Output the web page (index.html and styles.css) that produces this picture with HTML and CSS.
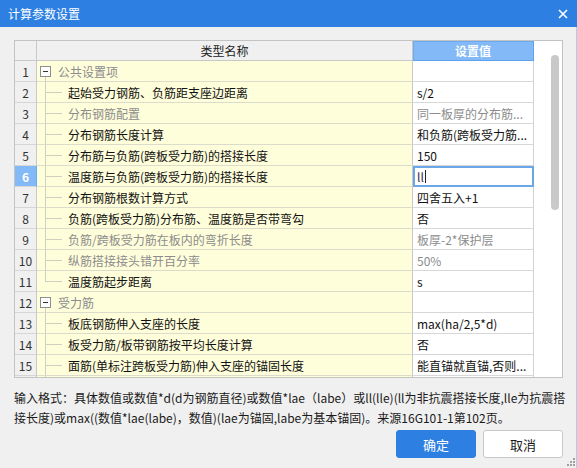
FILE: index.html
```html
<!DOCTYPE html>
<html lang="zh-CN">
<head>
<meta charset="utf-8">
<title>计算参数设置</title>
<link rel="stylesheet" href="styles.css">
</head>
<body>
<div class="dialog">
  <div class="titlebar">
    <span class="title">计算参数设置</span>
    <svg class="close" width="10" height="10" viewBox="0 0 10 10"><path d="M1 1 L9 9 M9 1 L1 9" stroke="#fff" stroke-width="1.6" fill="none"/></svg>
  </div>
  <div class="content">
    <div class="grid-wrap">
      <div class="grid">
        <div class="row head"><div class="c num"></div><div class="c name">类型名称</div><div class="c val">设置值</div></div>
        <div class="row group"><div class="c num">1</div><div class="c name"><span class="tree"><span class="box"></span></span><span class="muted">公共设置项</span></div><div class="c val"></div></div>
        <div class="row"><div class="c num">2</div><div class="c name"><span class="tree"></span>起始受力钢筋、负筋距支座边距离</div><div class="c val">s/2</div></div>
        <div class="row"><div class="c num">3</div><div class="c name"><span class="tree"></span><span class="muted">分布钢筋配置</span></div><div class="c val muted">同一板厚的分布筋...</div></div>
        <div class="row"><div class="c num">4</div><div class="c name"><span class="tree"></span>分布钢筋长度计算</div><div class="c val">和负筋(跨板受力筋...</div></div>
        <div class="row"><div class="c num">5</div><div class="c name"><span class="tree"></span>分布筋与负筋(跨板受力筋)的搭接长度</div><div class="c val">150</div></div>
        <div class="row sel"><div class="c num">6</div><div class="c name"><span class="tree"></span>温度筋与负筋(跨板受力筋)的搭接长度</div><div class="c val editing"><span class="input-text">ll</span><span class="caret"></span></div></div>
        <div class="row"><div class="c num">7</div><div class="c name"><span class="tree"></span>分布钢筋根数计算方式</div><div class="c val">四舍五入+1</div></div>
        <div class="row"><div class="c num">8</div><div class="c name"><span class="tree"></span>负筋(跨板受力筋)分布筋、温度筋是否带弯勾</div><div class="c val">否</div></div>
        <div class="row"><div class="c num">9</div><div class="c name"><span class="tree"></span><span class="muted">负筋/跨板受力筋在板内的弯折长度</span></div><div class="c val muted">板厚-2*保护层</div></div>
        <div class="row"><div class="c num">10</div><div class="c name"><span class="tree"></span><span class="muted">纵筋搭接接头错开百分率</span></div><div class="c val muted">50%</div></div>
        <div class="row last"><div class="c num">11</div><div class="c name"><span class="tree"></span>温度筋起步距离</div><div class="c val">s</div></div>
        <div class="row group"><div class="c num">12</div><div class="c name"><span class="tree"><span class="box"></span></span><span class="muted">受力筋</span></div><div class="c val"></div></div>
        <div class="row"><div class="c num">13</div><div class="c name"><span class="tree"></span>板底钢筋伸入支座的长度</div><div class="c val">max(ha/2,5*d)</div></div>
        <div class="row"><div class="c num">14</div><div class="c name"><span class="tree"></span>板受力筋/板带钢筋按平均长度计算</div><div class="c val">否</div></div>
        <div class="row"><div class="c num">15</div><div class="c name"><span class="tree"></span>面筋(单标注跨板受力筋)伸入支座的锚固长度</div><div class="c val">能直锚就直锚,否则...</div></div>
        <div class="row"><div class="c num"></div><div class="c name"><span class="tree"></span></div><div class="c val"></div></div>
      </div>
      <div class="vscroll"><div class="thumb"></div></div>
    </div>
    <p class="hint">输入格式：具体数值或数值*d(d为钢筋直径)或数值*lae（labe）或ll(lle)(ll为非抗震搭接长度,lle为抗震搭<br>接长度)或max((数值*lae(labe)，数值)(lae为锚固,labe为基本锚固)。来源16G101-1第102页。</p>
    <div class="actions">
      <button class="btn primary">确定</button>
      <button class="btn">取消</button>
    </div>
  </div>
  <svg class="grip" width="9" height="9" viewBox="0 0 9 9">
    <rect x="7" y="1" width="2" height="2" fill="#a0a0a0"/>
    <rect x="4" y="4" width="2" height="2" fill="#a0a0a0"/>
    <rect x="7" y="4" width="2" height="2" fill="#a0a0a0"/>
    <rect x="1" y="7" width="2" height="2" fill="#a0a0a0"/>
    <rect x="4" y="7" width="2" height="2" fill="#a0a0a0"/>
    <rect x="7" y="7" width="2" height="2" fill="#a0a0a0"/>
  </svg>
</div>
</body>
</html>
```

FILE: styles.css
```css
html, body {
  margin: 0;
  padding: 0;
}
body {
  font-family: "Noto Sans CJK SC", "Noto Sans", sans-serif;
  font-size: 12px;
  color: #111;
}
.dialog {
  position: relative;
  width: 577px;
  height: 468px;
  background: #f0f0f0;
  display: flex;
  flex-direction: column;
  overflow: hidden;
}
.titlebar {
  height: 27px;
  flex: none;
  background: #2d80e1;
  color: #fff;
  display: flex;
  align-items: center;
  justify-content: space-between;
  padding: 0 9px 0 8px;
  font-size: 12px;
}
.close {
  display: block;
}
.content {
  flex: 1;
  padding: 13px 13px 0 14px;
  border-right: 1px solid #b3cbe9;
}
.grid-wrap {
  display: flex;
  height: 338px;
  box-sizing: border-box;
  border: 1px solid #c3c3c3;
  background: #fff;
  overflow: hidden;
}
.grid {
  width: 519px;
  flex: none;
}
.row {
  display: flex;
  height: 21px;
}
.c {
  box-sizing: border-box;
  height: 100%;
  border-right: 1px solid #d3d3d3;
  border-bottom: 1px solid #d8d8d8;
  display: flex;
  align-items: center;
  white-space: nowrap;
  overflow: hidden;
}
.num {
  width: 22px;
  flex: none;
  justify-content: center;
  background: #f0f0f0;
  color: #333;
  border-right-color: #c8c8c8;
  border-bottom-color: #d6d6d6;
}
.name {
  width: 376px;
  flex: none;
  background: #fffedb;
  border-right-color: #c8c8c8;
  border-bottom-color: #dcdccc;
}
.val {
  width: 121px;
  flex: none;
  padding-left: 4px;
}
.muted {
  color: #8c8c8c;
}
.head {
  height: 20px;
}
.head .c {
  background: #f0f0f0;
  justify-content: center;
  color: #222;
  border-bottom-color: #c8c8c8;
}
.head .val {
  background: #82b9f6;
  color: #fff;
  font-weight: bold;
  padding-left: 0;
  border-right-color: #5ea2ee;
  border-bottom-color: #5ea2ee;
  box-shadow: inset 1px 1px 0 #6aaaf0;
}
.sel .num {
  background: #82b9f6;
  color: #fff;
  font-weight: bold;
  border-right-color: #6aa8ef;
}
.editing {
  outline: 2px solid #6aa6e8;
  outline-offset: -2px;
}
.input-text {
  color: #3a2a4a;
}
.caret {
  width: 1px;
  height: 13px;
  background: #222;
  margin-left: 1px;
}
.tree {
  position: relative;
  flex: none;
  width: 31px;
  height: 100%;
}
.tree::before {
  content: "";
  position: absolute;
  left: 8px;
  top: 0;
  bottom: -1px;
  border-left: 1px solid #cfcfc4;
}
.tree::after {
  content: "";
  position: absolute;
  left: 8px;
  top: 10px;
  width: 17px;
  border-top: 1px solid #cfcfc4;
}
.last .tree::before {
  bottom: auto;
  height: 10px;
}
.group .tree {
  width: 21px;
}
.group .tree::before {
  top: 16px;
}
.group .tree::after {
  display: none;
}
.box {
  position: absolute;
  left: 3px;
  top: 5px;
  width: 11px;
  height: 11px;
  box-sizing: border-box;
  border: 1px solid #8e8e8e;
  background: #fff;
}
.box::after {
  content: "";
  position: absolute;
  left: 2px;
  top: 4px;
  width: 5px;
  height: 1px;
  background: #333;
}
.vscroll {
  flex: 1;
  padding: 14px 0 0 17px;
}
.thumb {
  width: 8px;
  height: 155px;
  border-radius: 4px;
  background: #c9c9c9;
}
.hint {
  margin: 10px 0 0;
  line-height: 20px;
  color: #1a1a1a;
  white-space: nowrap;
  font-size: 12px;
}
.actions {
  display: flex;
  justify-content: flex-end;
  gap: 7px;
  margin-top: 2px;
}
.btn {
  width: 80px;
  height: 28px;
  border-radius: 3px;
  border: 1px solid #c8c8c8;
  background: #fff;
  color: #1a1a1a;
  font-family: "Noto Sans CJK SC", sans-serif;
  font-size: 13px;
  padding: 0;
}
.btn.primary {
  background: #2d80e1;
  border-color: #2d80e1;
  color: #fff;
}
.grip {
  position: absolute;
  right: 2px;
  bottom: 2px;
}
```
